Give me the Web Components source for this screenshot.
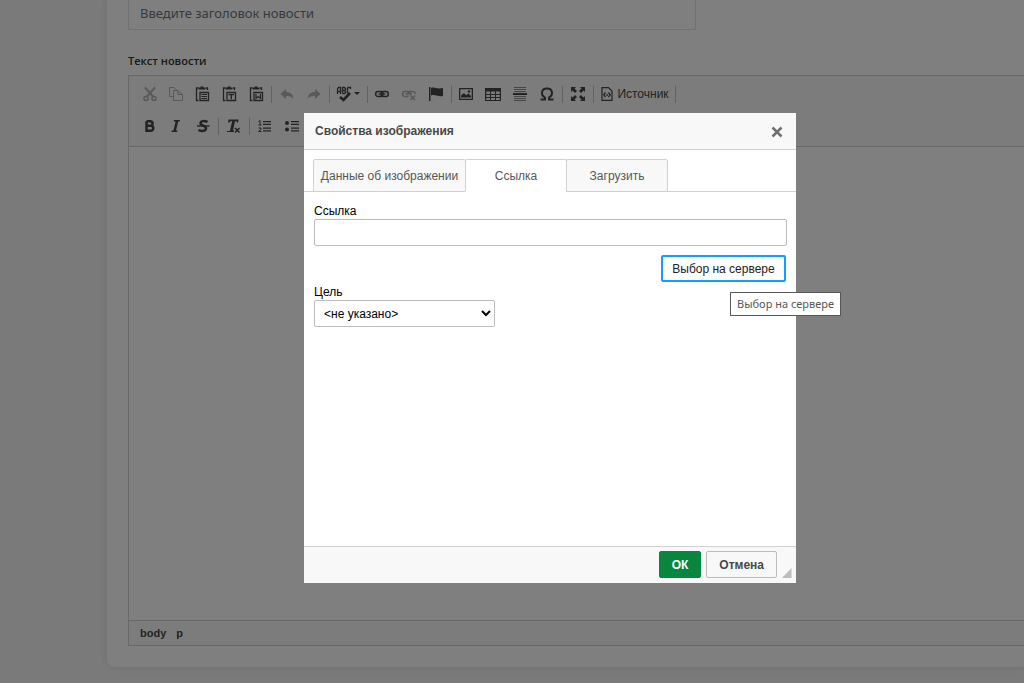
<!DOCTYPE html>
<html lang="ru">
<head>
<meta charset="utf-8">
<meta name="viewport" content="width=device-width, initial-scale=1">
<title>Свойства изображения</title>
<style>
  body { margin: 0; background: #f5f5f5; font-family: "Liberation Sans", Arial, sans-serif; font-size: 12px; color: #222; }
</style>
</head>
<body>
<news-form>
  <rich-editor>
    <tool-row>
      <tool-group style="--w:133px">
        <tool-button icon="cut" label="Вырезать" off></tool-button>
        <tool-button icon="copy" label="Копировать" off></tool-button>
        <tool-button icon="paste" label="Вставить"></tool-button>
        <tool-button icon="pasteText" label="Вставить текст"></tool-button>
        <tool-button icon="pasteWord" label="Вставить из Word"></tool-button>
      </tool-group>
      <tool-group style="--w:54px">
        <tool-button icon="undo" label="Отменить" off></tool-button>
        <tool-button icon="redo" label="Повторить" off></tool-button>
      </tool-group>
      <tool-group style="--w:34px">
        <tool-button icon="spell" label="Орфография" menu></tool-button>
      </tool-group>
      <tool-group style="--w:80px">
        <tool-button icon="link" label="Вставить ссылку"></tool-button>
        <tool-button icon="unlink" label="Убрать ссылку" off></tool-button>
        <tool-button icon="flag" label="Якорь"></tool-button>
      </tool-group>
      <tool-group style="--w:107px">
        <tool-button icon="image" label="Изображение"></tool-button>
        <tool-button icon="table" label="Таблица"></tool-button>
        <tool-button icon="rule" label="Линия"></tool-button>
        <tool-button icon="omega" label="Символ"></tool-button>
      </tool-group>
      <tool-group style="--w:27px">
        <tool-button icon="expand" label="Развернуть"></tool-button>
      </tool-group>
      <tool-group style="--w:78px">
        <tool-button icon="source" label="Источник">Источник</tool-button>
      </tool-group>
    </tool-row>
    <tool-row>
      <tool-group style="--w:80px">
        <tool-button icon="bold" label="Полужирный"></tool-button>
        <tool-button icon="italic" label="Курсив"></tool-button>
        <tool-button icon="strike" label="Зачёркнутый"></tool-button>
      </tool-group>
      <tool-group style="--w:27px">
        <tool-button icon="clear" label="Убрать форматирование"></tool-button>
      </tool-group>
      <tool-group style="--w:54px">
        <tool-button icon="ol" label="Нумерованный список"></tool-button>
        <tool-button icon="ul" label="Маркированный список"></tool-button>
      </tool-group>
    </tool-row>
  </rich-editor>
</news-form>
<modal-cover>
  <modal-window>
    <span slot="title">Свойства изображения</span>
    <tab-strip slot="tabs"></tab-strip>
    <link-form></link-form>
  </modal-window>
</modal-cover>

<script>
const ICONS = {
  cut: '<g fill="none" stroke="currentColor" stroke-width="2"><path d="M4 1.500 12.500 11M14 1.500 5.500 11"/><circle cx="5" cy="12.500" r="2" stroke-width="1.600"/><circle cx="13" cy="12.500" r="2" stroke-width="1.600"/></g>',
  copy: '<g fill="none" stroke="currentColor"><path d="M5 10.500H1.500V1.500H6L9.500 5"/><path d="M5.500 4.500H10L14.500 8.500V14.500H5.500Z"/><path d="M10 4.500V8.500H14.500"/></g>',
  board: '<path d="M4.500 2H2.500V14.500H4.500M12 2H13.500V4" fill="none" stroke="currentColor" stroke-width="1.300"/><path d="M4.500 3.500V1.500H6.500V.500H9.500V1.500H11.500V3.500Z"/><path d="M6 6.500H14.500V14.500H6Z" fill="none" stroke="currentColor" stroke-width="1.300"/>',
  undo: '<path d="M1.500 8 7 3V6C11.500 6 14 8.500 14.500 13 12.500 10.500 10.500 9.800 7 10V13Z"/>',
  redo: '<path d="M14.500 8 9 3V6C4.500 6 2 8.500 1.500 13 3.500 10.500 5.500 9.800 9 10V13Z"/>',
  spell: '<g fill="none" stroke="currentColor" stroke-width="1.300"><path d="M1.500 8V3L2.500 1.500 4.500 1.500V8M1.500 5.500H4.500M6.500 7.500V1.500H8.500L9.500 2.500V3.500L8.500 4.500H6.500M8.500 4.500 9.500 5.500V6.500L8.500 7.500H6.500M14.500 3V1.500H12L11.500 2.500V6.500L12 7.500H13"/><path d="M4 11 7.500 14 14 7" stroke-width="2.600"/></g>',
  link: '<g fill="none" stroke="currentColor"><rect x="1.700" y="5.500" width="7.300" height="5" rx="2.300" stroke-width="1.500"/><rect x="7" y="5.500" width="7.300" height="5" rx="2.300" stroke-width="1.500"/><path d="M4.500 8H11.500" stroke-width="1.300"/></g>',
  unlink: '<g fill="none" stroke="currentColor" stroke-width="1.500"><path d="M9 8V7.500A2 2 0 0 0 7 5.500H4A2.500 2.500 0 0 0 4 10.500H7.500M7 7.500A2 2 0 0 1 9 5.500H12A2.300 2.300 0 0 1 14.300 8M4.500 8H11M9.500 9.500 14 14M14 9.500 9.500 14"/></g>',
  flag: '<path d="M1 1H2.500V15H1ZM3 2C6.500 .500 9 3.500 15 2V10C9.500 11 7 8 3 9.500Z"/>',
  image: '<path fill-rule="evenodd" d="M1 2H15V14H1ZM2.300 3.300V12.700H13.700V3.300Z"/><path d="M3 11.500V9.500L6 7 8 9.200 10.500 7.500 13 10V11.500Z"/><circle cx="11" cy="5.500" r="1.200"/>',
  table: '<path fill-rule="evenodd" d="M0 2H16V15H0ZM1.200 5.500V8H5V5.500ZM6 5.500V8H10V5.500ZM11 5.500V8H14.800V5.500ZM1.200 9V11H5V9ZM6 9V11H10V9ZM11 9V11H14.800V9ZM1.200 12V14H5V12ZM6 12V14H10V12ZM11 12V14H14.800V12Z"/>',
  rule: '<path d="M1 7H15V9H1Z"/><path d="M2 1H14V2H2ZM2 3H14V4H2ZM2 5H14V6H2ZM2 10H14V11H2ZM2 12H14V13H2ZM2 14H14V15H2Z" opacity=".600"/>',
  omega: '<path fill="none" stroke="currentColor" stroke-width="2" d="M1.500 13.500H6V11.500C1.500 9 2 2.500 8 2.500S14.500 9 10 11.500V13.500H14.500"/>',
  expand: '<path d="M1 1H6L4.500 2.500 7 5 5 7 2.500 4.500 1 6ZM15 1H10L11.500 2.500 9 5 11 7 13.500 4.500 15 6ZM1 15H6L4.500 13.500 7 11 5 9 2.500 11.500 1 10ZM15 15H10L11.500 13.500 9 11 11 9 13.500 11.500 15 10Z"/>',
  source: '<g fill="none" stroke="currentColor" stroke-width="1.200"><path d="M3 1.600H9.500L13 5V14.400H3Z"/><path d="M6.500 6.500 4.800 8.800 6.500 11M9.500 6.500 11.200 8.800 9.500 11M8 8V10" stroke-width="1.300"/></g>',
  bold: '<path fill="none" stroke="currentColor" stroke-width="2.500" d="M5.500 3.200V12.800H9.800A2.500 2.500 0 0 0 9.800 7.800H5.500M5.500 3.200H9.300A2.300 2.300 0 0 1 9.300 7.800"/>',
  italic: '<path d="M6 2H12L11.700 3.500H10.200L8 12.500H9.500L9.200 14H3.500L3.800 12.500H5.400L7.600 3.500H5.700Z"/>',
  strike: '<path fill="none" stroke="currentColor" stroke-width="2.400" d="M12.500 4C10.500 2.700 5.500 2.500 5.500 5.200 5.500 8 11.500 7.500 11 10.700 10.500 13.500 5.500 13.300 3.500 12"/><path d="M2 7.300H14.500V8.700H2Z"/>',
  clear: '<path d="M2.500 1.500H12.500L12 4.500H10.700L10.800 3.300H9L7 12.500H8V14H1V13H3.800L6.200 3.300H4.200L3.600 4.500H2Z"/><path d="M9 10 13.500 14.500M13.500 10 9 14.500" fill="none" stroke="currentColor" stroke-width="1.500"/>',
  ol: '<path d="M6 3H14V4.300H6ZM6 5.800H14V7H6ZM6 9.500H14V10.800H6ZM6 12.200H14V13.500H6Z"/><path fill="none" stroke="currentColor" d="M1.500 3.500 3 2.500V7M1.500 7H4.500M1.500 10H4V11.500L1.500 13.500H4.500"/>',
  ul: '<circle cx="3" cy="5" r="2"/><circle cx="3" cy="11.500" r="2"/><path d="M7 3H15V4.300H7ZM7 5.800H15V7H7ZM7 9.500H15V10.800H7ZM7 12.200H15V13.500H7Z"/>'
};
ICONS.paste = ICONS.board + '<path d="M7.500 8H13V9H7.500ZM7.500 10H13V11H7.500ZM7.500 12H13V13H7.500Z"/>';
ICONS.pasteText = ICONS.board + '<path d="M7.500 8H13V9.300H11V13.300H9.600V9.300H7.500Z"/>';
ICONS.pasteWord = ICONS.board + '<path fill="none" stroke="currentColor" stroke-width="1.200" d="M8 8V12.500L10.200 10.500 12.500 12.500V8"/>';

const define = (name, html) => customElements.define(name, class extends HTMLElement {
  constructor() { super(); this.attachShadow({ mode: 'open' }); }
  connectedCallback() {
    this.shadowRoot.innerHTML = typeof html === 'function' ? html(this) : html;
  }
});

define('tool-button', el => `<style>
  :host { display: flex; min-width: 0; }
  button { flex: 1; display: flex; align-items: center; justify-content: center; gap: 2px; min-width: 0; padding: 0; border: 0; background: none; color: #474747; font: inherit; white-space: nowrap; }
  button:disabled { opacity: .35; color: #333; }
  svg { flex: none; width: 16px; height: 16px; fill: currentColor; }
  .arrow { width: 6px; height: 4px; }
</style><button type="button" aria-label="${el.getAttribute('label')}" ${el.hasAttribute('off') ? 'disabled' : ''}>
<svg viewBox="0 0 16 16" aria-hidden="true">${ICONS[el.getAttribute('icon')]}</svg><slot></slot>${el.hasAttribute('menu') ? '<svg class="arrow" viewBox="0 0 6 4"><path d="M0 0H6L3 3Z"/></svg>' : ''}</button>`);

define('tool-group', `<style>
  :host { display: flex; align-items: center; }
  div { display: grid; grid-auto-flow: column; grid-auto-columns: 1fr; width: var(--w); height: 28px; }
  i { width: 1px; height: 17px; margin: 0 1px 0 2px; background: #c4c4c4; }
</style><div><slot></slot></div><i></i>`);

define('tool-row', `<style>:host { display: flex; height: 32px; align-items: center; }</style><slot></slot>`);

define('rich-editor', `<style>
  :host { display: block; border: 1px solid #d1d1d1; border-right: 0; background: #fff; }
  .tools { padding: 2px 7px 4px; background: #f8f8f8; border-bottom: 1px solid #d1d1d1; }
  .area { height: 473px; outline: 0; }
  nav { display: flex; gap: 10px; padding: 0 11px; line-height: 24px; background: #f8f8f8; border-top: 1px solid #d1d1d1; }
  a { color: #484848; font-size: 11px; font-weight: bold; text-decoration: none; }
</style>
<div class="tools" role="toolbar"><slot></slot></div>
<div class="area" contenteditable="true" role="textbox" aria-label="Текст новости"></div>
<nav><a href="#body">body</a><a href="#p">p</a></nav>`);

define('news-form', `<style>
  :host { display: block; padding: 0 0 16px 107px; }
  section { padding: 0 0 21px 21px; background: #fff; border-radius: 0 0 0 8px; box-shadow: 0 0 10px rgba(0,0,0,.1); }
  input { display: block; box-sizing: border-box; width: 100%; max-width: 568px; height: 30px; padding: 0 11px 4px; border: 1px solid #e5e5e5; border-top: 0; background: #fff; font: 13px "Noto Sans", sans-serif; }
  input::placeholder { color: #6c757d; opacity: 1; }
  h2 { margin: 0; padding: 23px 0 6px; font: 600 11px/16px "Open Sans", sans-serif; color: #333; }
</style>
<section>
  <input type="text" aria-label="Заголовок новости" placeholder="Введите заголовок новости">
  <h2>Текст новости</h2>
  <slot></slot>
</section>`);

define('modal-cover', `<style>
  :host { position: fixed; inset: 0; box-sizing: border-box; padding: 113px 0 0 304px; background: rgba(0,0,0,.5); }
</style><slot></slot>`);

define('modal-window', `<style>
  :host { display: flex; flex-direction: column; box-sizing: border-box; max-width: 492px; min-height: 470px; background: #fff; }
  header { display: flex; align-items: center; justify-content: space-between; height: 36px; padding: 0 13px 0 11px; background: #f8f8f8; border-bottom: 1px solid #d1d1d1; color: #484848; }
  h1 { margin: 0; font-size: 12px; line-height: 16px; font-weight: bold; }
  header button { display: flex; padding: 2px 0 0; border: 0; background: none; color: #707070; }
  main { flex: 1; padding: 11px 9px 0 10px; }
  footer { display: flex; justify-content: flex-end; align-items: flex-start; gap: 5px; height: 32px; padding: 4px 4px 0 0; background: #f8f8f8; border-top: 1px solid #d1d1d1; }
  footer button { height: 27px; padding: 0 12px; border: 1px solid #bcbcbc; border-radius: 2px; background: #f8f8f8; color: #484848; font: bold 12px "Liberation Sans", Arial, sans-serif; }
  footer .ok { border-color: #09863e; background: #09863e; color: #fff; }
  footer svg { align-self: flex-end; padding-bottom: 5px; }
</style>
<header><h1><slot name="title"></slot></h1><button type="button" aria-label="Закрыть"><svg width="12" height="12" viewBox="0 0 12 12"><path d="M1.500 1.500 10.500 10.500M10.500 1.500 1.500 10.500" stroke="currentColor" stroke-width="2.500"/></svg></button></header>
<slot name="tabs"></slot>
<main><slot></slot></main>
<footer><button type="button" class="ok">ОК</button><button type="button">Отмена</button><svg width="10" height="10" viewBox="0 0 10 10"><path d="M9.500 0V10H0Z" fill="#bcbcbc"/></svg></footer>`);

define('tab-strip', `<style>
  :host { display: block; padding: 9px 9px 0; border-bottom: 1px solid #d1d1d1; }
  div { display: flex; }
  button { box-sizing: border-box; width: 102px; height: 33px; margin: 0 0 -1px -1px; padding: 0; border: 1px solid #d1d1d1; border-radius: 2px 2px 0 0; background: #f8f8f8; color: #575757; font: 12px "Liberation Sans", Arial, sans-serif; }
  button:first-child { width: 153px; margin-left: 0; }
  button[aria-selected=true] { background: #fff; border-bottom-color: #fff; }
</style>
<div role="tablist"><button type="button" role="tab">Данные об изображении</button><button type="button" role="tab" aria-selected="true">Ссылка</button><button type="button" role="tab">Загрузить</button></div>`);

define('link-form', `<style>
  :host { display: block; color: #000; }
  label { display: block; line-height: 16px; }
  input, select { box-sizing: border-box; display: block; height: 27px; border: 1px solid #bcbcbc; border-radius: 2px; background: #fff; font: 12px "Liberation Sans", Arial, sans-serif; color: #000; }
  input { width: 100%; padding: 0 6px; }
  select { width: 181px; padding: 0 0 0 5px; }
  .pick { position: relative; display: flex; justify-content: flex-end; padding: 9px 1px 2px 0; }
  .pick button { box-sizing: border-box; height: 27px; width: 125px; padding: 0; border: 2px solid #139ff7; border-radius: 2px; background: #fff; color: #222; font: 12px "Liberation Sans", Arial, sans-serif; }
  .tip { position: absolute; top: 46px; right: -54px; padding: 3px 6px; border: 1px solid #575757; background: #fff; color: #575757; font: 11px/16px "Noto Sans", sans-serif; white-space: nowrap; }
</style>
<label for="url">Ссылка</label>
<input id="url" type="text">
<div class="pick"><button type="button" aria-describedby="tip">Выбор на сервере</button><span class="tip" id="tip" role="tooltip">Выбор на сервере</span></div>
<label for="target">Цель</label>
<select id="target"><option>&lt;не указано&gt;</option></select>`);
</script>
</body>
</html>
